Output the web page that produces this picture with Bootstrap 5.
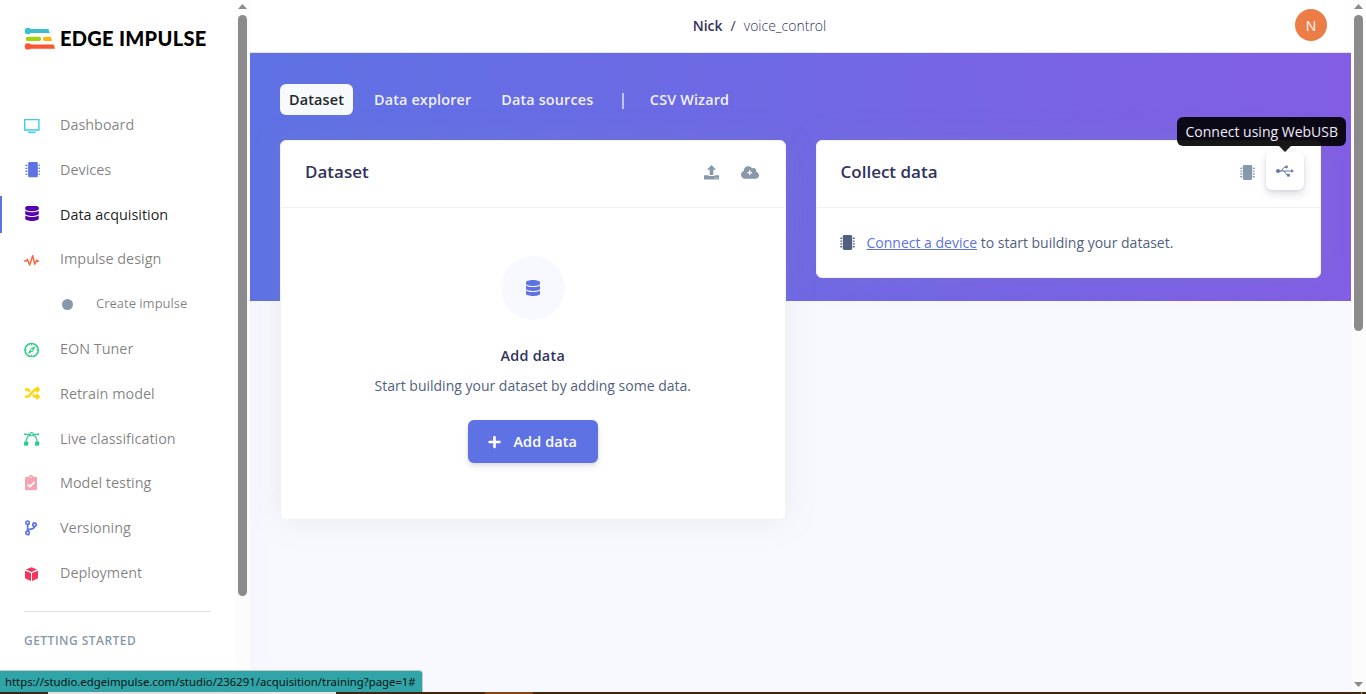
<!DOCTYPE html>
<html lang="en">
<head>
<meta charset="utf-8">
<meta name="viewport" content="width=device-width, initial-scale=1">
<title>Data acquisition - voice_control - Edge Impulse</title>
<link href="https://cdn.jsdelivr.net/npm/bootstrap@5.3.0/dist/css/bootstrap.min.css" rel="stylesheet">
<style>
body{font-family:"Open Sans",sans-serif;font-size:14.4px;line-height:1.5;color:#525f7f;background:#f8f9fe;height:694px;overflow:hidden}
.app-shell{height:692px}
.app-sidebar{width:235px;padding:0 24px;box-shadow:0 0 32px rgba(136,152,170,.15)}
.brand-row{height:102.45px;padding-top:26px}
.brand-name{font:900 20px/24px Lato,sans-serif;color:#000;letter-spacing:.3px;margin-left:5px;white-space:nowrap}
.side-item{height:44.8px;margin:0 -24px;padding:0 24px;color:rgba(0,0,0,.5);position:relative;text-decoration:none;white-space:nowrap}
.side-item svg{width:16px;height:16px;margin-right:20px;flex:none}
.side-item.is-current{color:rgba(0,0,0,.9)}
.side-item.is-current::before{content:"";position:absolute;left:0;top:4px;height:37px;width:2px;background:#5e72e4}
.side-item.is-sub{font-size:13px;padding-left:60px}
.side-dot{width:11px;height:11px;border-radius:50%;background:#8898aa;margin:0 23.5px 0 1.5px}
.side-rule{height:1px;background:#e2e3e4;margin:16px 0 20px}
.side-title{font-size:12px;font-weight:600;letter-spacing:.48px;color:#8898aa}
.scroll-rail{width:15px;background:#fcfcfc;padding:4px 0 5px;z-index:3}
.rail-thumb{width:9px;border-radius:5px;background:#8b8b8b;margin-top:6px}
.arrow-up,.arrow-down{width:9px;height:5px;background:#8b8b8b;clip-path:polygon(50% 0,100% 100%,0 100%)}
.arrow-down{transform:scaleY(-1)}
.top-row{height:53px;background:#fff;border-bottom:1px solid #e3e6ea;font-size:14px;color:#32325d;padding-right:24px;padding-bottom:2px}
.brand-path{padding-right:26px}
.project-name{font-weight:300}
.avatar-dot{width:32px;height:32px;background:#ed7d47;color:#fff;font-size:14px}
.hero-band{height:248px;background:linear-gradient(87deg,#5e72e4 0,#825ee4 100%);padding:31px 30px 0}
.tab-link{height:31px;padding:0 9px;font-size:14.4px;font-weight:600;letter-spacing:.15px;color:rgba(255,255,255,.92);border-radius:6px;white-space:nowrap;text-decoration:none}
.tab-link.is-open{background:#f7fafc;color:#212529}
.tab-next{margin-left:12px}
.tab-divider{margin-left:7px;font-size:17px;font-weight:400;padding-bottom:2px}
.tab-wizard{margin-left:4px}
.panels{gap:30px;margin-top:25px}
.panel{flex:1 1 0;border:1px solid #f3f3f6;border-radius:6px;box-shadow:0 0 32px rgba(136,152,170,.15)}
.panel-head{height:67px;border-bottom:1px solid #eff0f1;padding:0 24px 4px}
.panel-head h1{font-size:17px;font-weight:600;color:#32325d;margin:0}
.head-tools{margin-right:-8px}
.tool-btn{width:38px;height:38px;color:#8898aa}
.usb-btn{background:#fff;border-radius:6px;box-shadow:0 4px 9px rgba(50,50,93,.16),0 1px 3px rgba(0,0,0,.08);color:#62799b;top:-1px}
.usb-tip{position:absolute;right:-42px;bottom:44px;height:29px;padding:0 8px;background:rgba(0,0,0,.91);border-radius:6px;color:#f0ecf8;font-size:14px;line-height:29px;white-space:nowrap}
.usb-tip::after{content:"";position:absolute;left:102px;top:29px;border:6px solid transparent;border-top-color:#1a1a1a;border-bottom:0}
.empty-dot{width:64px;height:64px;background:#f8f9fe;color:#5e72e4;margin-top:48px}
.empty-title{margin-top:25px;color:#32325d;font-size:14.4px;letter-spacing:.25px}
.empty-text{margin-top:8px;font-size:14px}
.btn-add{margin-top:24px;padding:1px 0 0;width:130px;height:43px;background:#5e72e4;color:#fff;font-size:14.4px;font-weight:600;letter-spacing:.15px;border-radius:6px;box-shadow:0 4px 6px rgba(50,50,93,.11),0 1px 3px rgba(0,0,0,.08)}
.device-row{font-size:14px;padding:0 23px}
.chip-lead{margin-right:12px}
.dev-link{color:#5e72e4}
.status-url{position:absolute;left:0;bottom:2px;height:22px;width:423px;background:#30a4a6;border:1px solid #c4cdd0;border-left:0;border-bottom:0;border-top-right-radius:4px;color:#061414;font:11.34px/21px "Noto Sans",sans-serif;padding-left:5px;white-space:nowrap;z-index:5}
.desk-edge{height:2px;background:linear-gradient(90deg,#3a2010 48px,#e9e6e4 48px 336px,#43240f 336px 485px,#8a4414 485px 533px,#43240f 533px 1361px,#a89080 1361px 1362px,#43240f 1362px)}
</style>
<script src="https://cdn.jsdelivr.net/npm/bootstrap@5.3.0/dist/js/bootstrap.bundle.min.js"></script>
</head>
<body>
<svg class="d-none" xmlns="http://www.w3.org/2000/svg">
<symbol id="i-db" viewBox="0 0 448 512"><path d="M448 73.143v45.714C448 159.143 347.667 192 224 192S0 159.143 0 118.857V73.143C0 32.857 100.333 0 224 0s224 32.857 224 73.143zM448 176v102.857C448 319.143 347.667 352 224 352S0 319.143 0 278.857V176c48.125 33.143 136.208 48.572 224 48.572S399.874 209.143 448 176zm0 160v102.857C448 479.143 347.667 512 224 512S0 479.143 0 438.857V336c48.125 33.143 136.208 48.572 224 48.572S399.874 369.143 448 336z"/></symbol>
<symbol id="i-chip" viewBox="0 0 512 512"><rect x="96" width="320" height="512" rx="48"/><path d="M72 88v48H30v-6H6q-6 0-6-6v-18q0-6 6-6h24V88zM72 184v48H30v-6H6q-6 0-6-6v-18q0-6 6-6h24v-12zM72 280v48H30v-6H6q-6 0-6-6v-18q0-6 6-6h24v-12zM72 376v48H30v-6H6q-6 0-6-6v-18q0-6 6-6h24v-12zM440 88v48h42v-6h24q6 0 6-6v-18q0-6-6-6h-24V88zM440 184v48h42v-6h24q6 0 6-6v-18q0-6-6-6h-24v-12zM440 280v48h42v-6h24q6 0 6-6v-18q0-6-6-6h-24v-12zM440 376v48h42v-6h24q6 0 6-6v-18q0-6-6-6h-24v-12z"/></symbol>
</svg>
<div class="app-shell d-flex">
  <nav class="app-sidebar bg-white d-flex flex-column flex-shrink-0">
    <div class="brand-row d-flex align-items-start flex-shrink-0">
      <svg width="31" height="24" viewBox="0 0 31 24" class="flex-shrink-0"><g fill="#3bbfd0"><circle cx="4" cy="5" r="3.2"/><path d="M3 3h21.500l1.300 4H3z"/></g><rect x="1.700" y="10.800" width="15.500" height="4.300" rx="2.100" fill="#a2d20e"/><path d="M21 10.800h5.800l1.500 4.300H21a2.100 2.100 0 0 1 0-4.300z" fill="#fdb511"/><g fill="#fb5530"><circle cx="4" cy="20.400" r="3.200"/><path d="M3 18.500h26.600L31 22.800H3z"/></g></svg>
      <span class="brand-name">EDGE IMPULSE</span>
    </div>
    <a class="side-item d-flex align-items-center"><svg viewBox="0 0 16 16" fill="none" stroke="#35ceef"><path d="M.7 2.600h14.200v10.400H.7z" stroke-width="1.400"/><path d="M4 15.300h7.500" stroke-width="1.400"/></svg>Dashboard</a>
    <a class="side-item d-flex align-items-center"><svg viewBox="-1 0 16 16"><use href="#i-chip" width="16" height="15.500" fill="#5e72e4"/></svg>Devices</a>
    <a class="side-item is-current d-flex align-items-center"><svg viewBox="0 .6 16 16"><use href="#i-db" x="1" width="14" height="15.500" fill="#5603ad"/></svg>Data acquisition</a>
    <a class="side-item d-flex align-items-center"><svg viewBox="0 -1 16 16" fill="none" stroke="#fb6340" stroke-width="1.500" stroke-linejoin="round"><path d="M0 9h2.400l.9-1.700L5.700 13 8.700 3.700l2 8.500 2-4.200.7 1.200H15"/></svg>Impulse design</a>
    <a class="side-item is-sub d-flex align-items-center"><span class="side-dot"></span>Create impulse</a>
    <a class="side-item d-flex align-items-center"><svg viewBox="0 -.4 16 16" fill="none" stroke="#2dce89"><circle cx="7.600" cy="8.700" r="6.700" stroke-width="1.500"/><path d="M7.600 2v2M7.600 13.500v2M.7 8.700h2M12.500 8.700h2"/><path d="M11.500 4.700 9 10.100 3.700 12.700 6.300 7.400z" fill="#2dce89" stroke="none"/><circle cx="7.600" cy="8.700" r="1" fill="#fff" stroke="none"/></svg>EON Tuner</a>
    <a class="side-item d-flex align-items-center"><svg viewBox="-30 16 542 542"><path fill="#ffd600" d="M504.971 359.029c9.373 9.373 9.373 24.569 0 33.941l-80 79.984c-15.010 15.010-40.971 4.490-40.971-16.971V416h-58.785a12.004 12.004 0 0 1-8.773-3.812l-70.556-75.596 53.333-57.143L352 336h32v-39.981c0-21.438 25.943-31.998 40.971-16.971l80 79.981zM12 176h84l52.781 56.551 53.333-57.143-70.556-75.596A11.999 11.999 0 0 0 122.785 96H12c-6.627 0-12 5.373-12 12v56c0 6.627 5.373 12 12 12zm372 0v39.984c0 21.460 25.961 31.980 40.971 16.971l80-79.984c9.373-9.373 9.373-24.569 0-33.941l-80-79.981C409.943 24.021 384 34.582 384 56.019V96h-58.785a12.004 12.004 0 0 0-8.773 3.812L96 336H12c-6.627 0-12 5.373-12 12v56c0 6.627 5.373 12 12 12h110.785c3.326 0 6.503-1.381 8.773-3.812L352 176h32z"/></svg>Retrain model</a>
    <a class="side-item d-flex align-items-center"><svg viewBox="0 0 16 16" fill="none" stroke="#2dce89"><path d="M1 4.300h5M9.500 4.300h5M2.100 12c0-4 1.600-6 4.400-7M13.100 12c0-4-1.600-6-4.400-7" stroke-width="1.300"/><circle cx="7.600" cy="4.300" r="1.700" stroke-width="1.200"/><g fill="#2dce89" stroke="none"><circle cx="1" cy="4.300" r="1"/><circle cx="14.300" cy="4.300" r="1"/><rect x="0" y="11.400" width="4.300" height="4.300" rx="1.200"/><rect x="11" y="11.400" width="4.300" height="4.300" rx="1.200"/></g></svg>Live classification</a>
    <a class="side-item d-flex align-items-center"><svg viewBox="0 0 16 16"><path fill="#f3a4b5" d="M2.500 1.700h2.200a2.400 2.400 0 0 1 4.600 0h2.200q1.500 0 1.500 1.500v10.600q0 1.500-1.500 1.500h-9Q1 15.300 1 13.800V3.200Q1 1.700 2.500 1.700z"/><circle cx="7" cy="2.200" r=".7" fill="#fff"/><path d="m3.700 9.500 2.200 2.200 4.700-4.700" fill="none" stroke="#fff" stroke-width="1.700"/></svg>Model testing</a>
    <a class="side-item d-flex align-items-center"><svg viewBox="0 0 16 16" fill="none" stroke="#5e72e4" stroke-width="1.700"><circle cx="3.600" cy="2.700" r="1.700"/><circle cx="3.600" cy="12.900" r="1.700"/><circle cx="10.500" cy="4.600" r="1.700"/><path d="M3.600 4.500v6.700M10.500 6.300c0 4.500-6.500 1.500-6.900 4.700"/></svg>Versioning</a>
    <a class="side-item d-flex align-items-center"><svg viewBox="0 -.6 16 16" fill="#f5365c"><path d="m7.500 1.600 5.600 2.400-5.600 2.300L1.900 4zM1 5.100l6 2.400v7.900l-5.200-2.200q-.8-.3-.8-1.200zM14 5.100 8 7.500v7.900l5.200-2.200q.8-.3.800-1.200z"/></svg>Deployment</a>
    <div class="side-rule flex-shrink-0"></div>
    <div class="side-title">GETTING STARTED</div>
  </nav>
  <div class="scroll-rail d-flex flex-column align-items-center flex-shrink-0"><div class="arrow-up"></div><div class="rail-thumb" style="height:581px"></div></div>
  <main class="flex-grow-1">
    <header class="top-row d-flex align-items-center">
      <div class="flex-grow-1 text-center brand-path"><span class="fw-semibold">Nick</span><span class="px-2">/</span><span class="project-name">voice_control</span></div>
      <div class="avatar-dot rounded-circle d-flex align-items-center justify-content-center">N</div>
    </header>
    <div class="hero-band">
      <div class="d-flex text-white">
        <a class="tab-link is-open d-flex align-items-center">Dataset</a>
        <a class="tab-link tab-next d-flex align-items-center">Data explorer</a>
        <a class="tab-link tab-next d-flex align-items-center">Data sources</a>
        <span class="tab-link tab-divider d-flex align-items-center">|</span>
        <a class="tab-link tab-wizard d-flex align-items-center">CSV Wizard</a>
      </div>
      <div class="panels d-flex align-items-start">
        <section class="panel card" style="height:380px">
          <div class="panel-head d-flex align-items-center justify-content-between"><h1>Dataset</h1>
            <div class="head-tools d-flex">
              <span class="tool-btn d-flex align-items-center justify-content-center"><svg width="15" height="15" viewBox="0 0 15 15" fill="currentColor"><path d="M7.500 0 12 4.700H9.300v5.200H5.700V4.700H3zM0 10.300h4.600v.7h5.800v-.7H15v3.500q0 .7-.7.700H.7q-.7 0-.7-.7z"/><circle cx="11" cy="12.900" r=".5" fill="#fff"/><circle cx="13" cy="12.900" r=".5" fill="#fff"/></svg></span>
              <span class="tool-btn d-flex align-items-center justify-content-center"><svg width="18" height="13" viewBox="0 0 640 448"><path fill="currentColor" d="M538 195c4-11 6-23 6-35 0-53-43-96-96-96-20 0-38 6-53 16C367 32 315 0 256 0 168 0 96 72 96 160v8C40 188 0 241 0 304c0 80 64 144 144 144h368c71 0 128-57 128-128 0-62-44-114-102-125z"/><path d="M310 140v170M225 225h170" stroke="#fff" stroke-width="46"/></svg></span>
            </div>
          </div>
          <div class="d-flex flex-column align-items-center">
            <div class="empty-dot rounded-circle d-flex align-items-center justify-content-center"><svg width="14" height="16" fill="currentColor"><use href="#i-db"/></svg></div>
            <div class="fw-semibold empty-title">Add data</div>
            <div class="empty-text">Start building your dataset by adding some data.</div>
            <button class="btn btn-add d-flex align-items-center justify-content-center"><svg class="me-2" width="13" height="14" viewBox="0 0 448 512" fill="#fff"><path d="M416 208H272V64c0-17.670-14.330-32-32-32h-32c-17.670 0-32 14.330-32 32v144H32c-17.670 0-32 14.330-32 32v32c0 17.670 14.330 32 32 32h144v144c0 17.670 14.330 32 32 32h32c17.670 0 32-14.330 32-32V304h144c17.670 0 32-14.330 32-32v-32c0-17.670-14.330-32-32-32z"/></svg><span class="ps-1">Add data</span></button>
          </div>
        </section>
        <section class="panel card" style="height:138px">
          <div class="panel-head d-flex align-items-center justify-content-between"><h1>Collect data</h1>
            <div class="head-tools d-flex">
              <span class="tool-btn d-flex align-items-center justify-content-center"><svg width="15" height="15" fill="currentColor"><use href="#i-chip"/></svg></span>
              <span class="tool-btn usb-btn position-relative d-flex align-items-center justify-content-center"><svg width="18" height="12" viewBox="0 0 18 12" fill="currentColor"><circle cx="2" cy="6" r="2"/><path d="M15 4.200 18 6l-3 1.800z"/><circle cx="10.500" cy="2" r="1.400"/><rect x="11" y="8.800" width="2.800" height="2.800"/><path d="M2 6h13.500M4.500 6c2 0 2.500-4 4.500-4h1.500M7.500 6c2 0 2 4.200 4 4.200h1" fill="none" stroke="currentColor"/></svg><span class="usb-tip">Connect using WebUSB</span></span>
            </div>
          </div>
          <div class="device-row d-flex align-items-center flex-grow-1"><svg width="15" height="15" fill="#525f7f" class="chip-lead"><use href="#i-chip"/></svg><span><a class="dev-link" href="#">Connect a device</a> to start building your dataset.</span></div>
        </section>
      </div>
    </div>
  </main>
  <div class="scroll-rail d-flex flex-column align-items-center flex-shrink-0"><div class="arrow-up"></div><div class="rail-thumb" style="height:316px"></div><div class="arrow-down mt-auto"></div></div>
</div>
<div class="desk-edge"></div>
<div class="status-url">https://studio.edgeimpulse.com/studio/236291/acquisition/training?page=1#</div>
</body>
</html>
